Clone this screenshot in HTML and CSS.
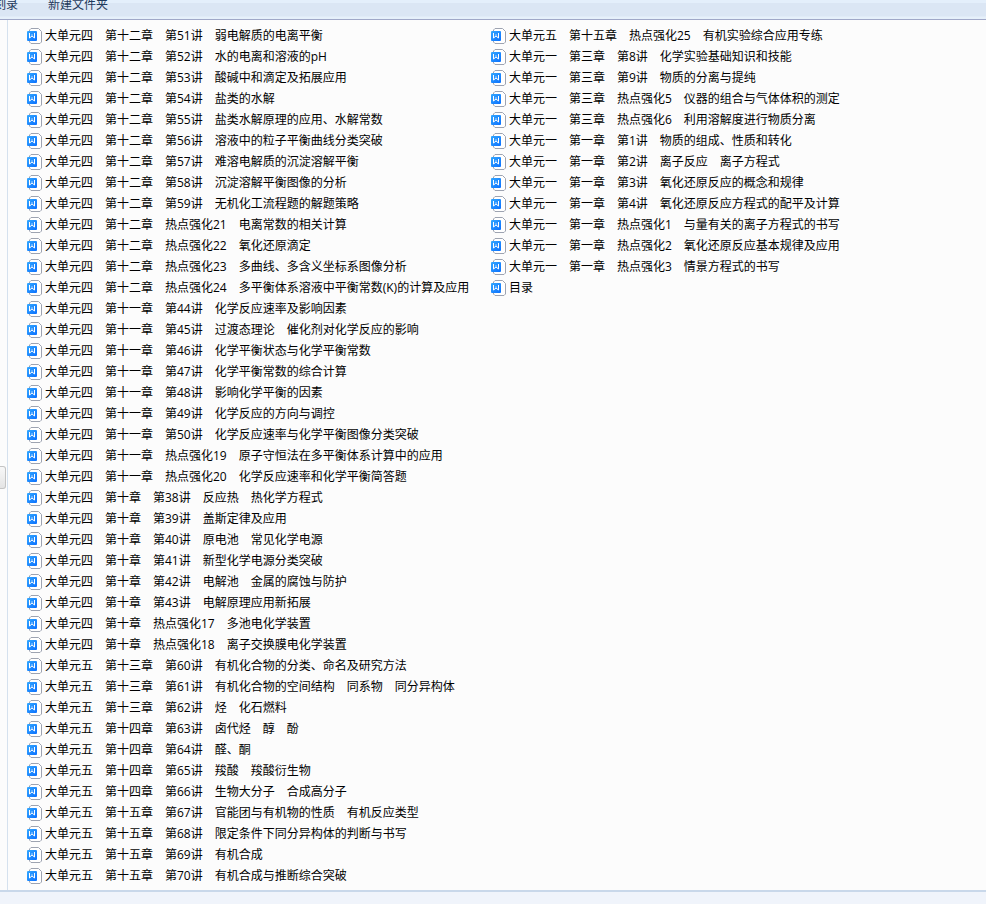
FILE: index.html
```
<!DOCTYPE html>
<html lang="zh-CN">
<head>
<title>新建文件夹</title>
<meta charset="UTF-8">
<meta name="viewport" content="width=device-width,initial-scale=1.0">
<link rel="stylesheet" href="styles.css">
</head>

<body>

<svg class="defs" width="0" height="0">
  <linearGradient id="blue" x1="0" y1="0" x2="1" y2="1">
    <stop offset="0" stop-color="#34a8ff"/>
    <stop offset="1" stop-color="#0a70ff"/>
  </linearGradient>
  <symbol id="doc" viewBox="0 0 15 16">
    <path d="M4 .5H11.5L14.5 3.5V14L13 15.5H4L2.5 14V2Z" fill="#fff" stroke="#9da3b1"/>
    <rect x="0" y="3" width="10" height="10" rx="1" fill="url(#blue)"/>
    <path d="M2.5 5V10L5 8L7.5 10V5" fill="none" stroke="#fff" stroke-linejoin="bevel"/>
    <path d="M5 6V8" stroke="#fff" stroke-opacity=".6"/>
  </symbol>
</svg>

<div class="toolbar">
  <button class="tool">刻录</button>
  <button class="tool">新建文件夹</button>
</div>

<div class="main">
  <div class="side"><div class="thumb"></div></div>
  <ul class="files">
    <li><svg class="icon"><use href="#doc"/></svg><a href="#">大单元四　第十二章　第51讲　弱电解质的电离平衡</a></li>
    <li><svg class="icon"><use href="#doc"/></svg><a href="#">大单元四　第十二章　第52讲　水的电离和溶液的pH</a></li>
    <li><svg class="icon"><use href="#doc"/></svg><a href="#">大单元四　第十二章　第53讲　酸碱中和滴定及拓展应用</a></li>
    <li><svg class="icon"><use href="#doc"/></svg><a href="#">大单元四　第十二章　第54讲　盐类的水解</a></li>
    <li><svg class="icon"><use href="#doc"/></svg><a href="#">大单元四　第十二章　第55讲　盐类水解原理的应用、水解常数</a></li>
    <li><svg class="icon"><use href="#doc"/></svg><a href="#">大单元四　第十二章　第56讲　溶液中的粒子平衡曲线分类突破</a></li>
    <li><svg class="icon"><use href="#doc"/></svg><a href="#">大单元四　第十二章　第57讲　难溶电解质的沉淀溶解平衡</a></li>
    <li><svg class="icon"><use href="#doc"/></svg><a href="#">大单元四　第十二章　第58讲　沉淀溶解平衡图像的分析</a></li>
    <li><svg class="icon"><use href="#doc"/></svg><a href="#">大单元四　第十二章　第59讲　无机化工流程题的解题策略</a></li>
    <li><svg class="icon"><use href="#doc"/></svg><a href="#">大单元四　第十二章　热点强化21　电离常数的相关计算</a></li>
    <li><svg class="icon"><use href="#doc"/></svg><a href="#">大单元四　第十二章　热点强化22　氧化还原滴定</a></li>
    <li><svg class="icon"><use href="#doc"/></svg><a href="#">大单元四　第十二章　热点强化23　多曲线、多含义坐标系图像分析</a></li>
    <li><svg class="icon"><use href="#doc"/></svg><a href="#">大单元四　第十二章　热点强化24　多平衡体系溶液中平衡常数(K)的计算及应用</a></li>
    <li><svg class="icon"><use href="#doc"/></svg><a href="#">大单元四　第十一章　第44讲　化学反应速率及影响因素</a></li>
    <li><svg class="icon"><use href="#doc"/></svg><a href="#">大单元四　第十一章　第45讲　过渡态理论　催化剂对化学反应的影响</a></li>
    <li><svg class="icon"><use href="#doc"/></svg><a href="#">大单元四　第十一章　第46讲　化学平衡状态与化学平衡常数</a></li>
    <li><svg class="icon"><use href="#doc"/></svg><a href="#">大单元四　第十一章　第47讲　化学平衡常数的综合计算</a></li>
    <li><svg class="icon"><use href="#doc"/></svg><a href="#">大单元四　第十一章　第48讲　影响化学平衡的因素</a></li>
    <li><svg class="icon"><use href="#doc"/></svg><a href="#">大单元四　第十一章　第49讲　化学反应的方向与调控</a></li>
    <li><svg class="icon"><use href="#doc"/></svg><a href="#">大单元四　第十一章　第50讲　化学反应速率与化学平衡图像分类突破</a></li>
    <li><svg class="icon"><use href="#doc"/></svg><a href="#">大单元四　第十一章　热点强化19　原子守恒法在多平衡体系计算中的应用</a></li>
    <li><svg class="icon"><use href="#doc"/></svg><a href="#">大单元四　第十一章　热点强化20　化学反应速率和化学平衡简答题</a></li>
    <li><svg class="icon"><use href="#doc"/></svg><a href="#">大单元四　第十章　第38讲　反应热　热化学方程式</a></li>
    <li><svg class="icon"><use href="#doc"/></svg><a href="#">大单元四　第十章　第39讲　盖斯定律及应用</a></li>
    <li><svg class="icon"><use href="#doc"/></svg><a href="#">大单元四　第十章　第40讲　原电池　常见化学电源</a></li>
    <li><svg class="icon"><use href="#doc"/></svg><a href="#">大单元四　第十章　第41讲　新型化学电源分类突破</a></li>
    <li><svg class="icon"><use href="#doc"/></svg><a href="#">大单元四　第十章　第42讲　电解池　金属的腐蚀与防护</a></li>
    <li><svg class="icon"><use href="#doc"/></svg><a href="#">大单元四　第十章　第43讲　电解原理应用新拓展</a></li>
    <li><svg class="icon"><use href="#doc"/></svg><a href="#">大单元四　第十章　热点强化17　多池电化学装置</a></li>
    <li><svg class="icon"><use href="#doc"/></svg><a href="#">大单元四　第十章　热点强化18　离子交换膜电化学装置</a></li>
    <li><svg class="icon"><use href="#doc"/></svg><a href="#">大单元五　第十三章　第60讲　有机化合物的分类、命名及研究方法</a></li>
    <li><svg class="icon"><use href="#doc"/></svg><a href="#">大单元五　第十三章　第61讲　有机化合物的空间结构　同系物　同分异构体</a></li>
    <li><svg class="icon"><use href="#doc"/></svg><a href="#">大单元五　第十三章　第62讲　烃　化石燃料</a></li>
    <li><svg class="icon"><use href="#doc"/></svg><a href="#">大单元五　第十四章　第63讲　卤代烃　醇　酚</a></li>
    <li><svg class="icon"><use href="#doc"/></svg><a href="#">大单元五　第十四章　第64讲　醛、酮</a></li>
    <li><svg class="icon"><use href="#doc"/></svg><a href="#">大单元五　第十四章　第65讲　羧酸　羧酸衍生物</a></li>
    <li><svg class="icon"><use href="#doc"/></svg><a href="#">大单元五　第十四章　第66讲　生物大分子　合成高分子</a></li>
    <li><svg class="icon"><use href="#doc"/></svg><a href="#">大单元五　第十五章　第67讲　官能团与有机物的性质　有机反应类型</a></li>
    <li><svg class="icon"><use href="#doc"/></svg><a href="#">大单元五　第十五章　第68讲　限定条件下同分异构体的判断与书写</a></li>
    <li><svg class="icon"><use href="#doc"/></svg><a href="#">大单元五　第十五章　第69讲　有机合成</a></li>
    <li><svg class="icon"><use href="#doc"/></svg><a href="#">大单元五　第十五章　第70讲　有机合成与推断综合突破</a></li>
    <li><svg class="icon"><use href="#doc"/></svg><a href="#">大单元五　第十五章　热点强化25　有机实验综合应用专练</a></li>
    <li><svg class="icon"><use href="#doc"/></svg><a href="#">大单元一　第三章　第8讲　化学实验基础知识和技能</a></li>
    <li><svg class="icon"><use href="#doc"/></svg><a href="#">大单元一　第三章　第9讲　物质的分离与提纯</a></li>
    <li><svg class="icon"><use href="#doc"/></svg><a href="#">大单元一　第三章　热点强化5　仪器的组合与气体体积的测定</a></li>
    <li><svg class="icon"><use href="#doc"/></svg><a href="#">大单元一　第三章　热点强化6　利用溶解度进行物质分离</a></li>
    <li><svg class="icon"><use href="#doc"/></svg><a href="#">大单元一　第一章　第1讲　物质的组成、性质和转化</a></li>
    <li><svg class="icon"><use href="#doc"/></svg><a href="#">大单元一　第一章　第2讲　离子反应　离子方程式</a></li>
    <li><svg class="icon"><use href="#doc"/></svg><a href="#">大单元一　第一章　第3讲　氧化还原反应的概念和规律</a></li>
    <li><svg class="icon"><use href="#doc"/></svg><a href="#">大单元一　第一章　第4讲　氧化还原反应方程式的配平及计算</a></li>
    <li><svg class="icon"><use href="#doc"/></svg><a href="#">大单元一　第一章　热点强化1　与量有关的离子方程式的书写</a></li>
    <li><svg class="icon"><use href="#doc"/></svg><a href="#">大单元一　第一章　热点强化2　氧化还原反应基本规律及应用</a></li>
    <li><svg class="icon"><use href="#doc"/></svg><a href="#">大单元一　第一章　热点强化3　情景方程式的书写</a></li>
    <li><svg class="icon"><use href="#doc"/></svg><a href="#">目录</a></li>
  </ul>
</div>

<div class="status"></div>

</body>
</html>
```
FILE: styles.css
```
* {
  box-sizing: border-box;
}

body {
  margin: 0;
  min-height: 100vh;
  display: flex;
  flex-direction: column;
  background: #fcfcfc;
  color: #000;
  font: 12px/21px "Open Sans", "Noto Sans CJK SC", sans-serif;
}

.defs {
  position: absolute;
}

/* only the lower edge of the command bar is in view */
.toolbar {
  display: flex;
  align-items: flex-end;
  gap: 30px;
  height: 20px;
  overflow: hidden;
  padding-bottom: 4px;
  background: linear-gradient(#e4effb 3px, #dbe6f4 3px, #dbe6f4 16px, #e6f0fa 17px);
  border-bottom: 1px solid #a0a8c8;
}

.tool {
  flex: none;
  border: 0;
  padding: 0;
  background: none;
  color: #1e395b;
  font: inherit;
}

.tool:first-child {
  margin-left: -6px;
}

.main {
  flex: 1;
  display: flex;
}

.side {
  width: 8px;
  display: flex;
  align-items: center;
  border-right: 1px solid #d5e1ee;
}

.thumb {
  width: 6px;
  height: 23px;
  margin-top: 45px;
  border: 1px solid #c4c4c4;
  border-left: 0;
  border-radius: 0 3px 3px 0;
  background: linear-gradient(#f8f8f8, #e4e4e4);
}

/* file list, filled top to bottom and then into the next column */
.files {
  flex: 1;
  display: grid;
  grid-auto-flow: column;
  grid-template-rows: repeat(41, 21px);
  grid-auto-columns: 464px;
  list-style: none;
  margin: 0;
  padding: 5px 0 4px 19px;
}

.files li {
  display: flex;
  align-items: center;
  gap: 3px;
  white-space: nowrap;
}

.files a {
  color: #000;
  text-decoration: none;
}

.icon {
  flex: none;
  width: 15px;
  height: 16px;
}

.status {
  height: 14px;
  border-top: 2px solid #c9d8ea;
  background: #f0f4fb;
}
```
